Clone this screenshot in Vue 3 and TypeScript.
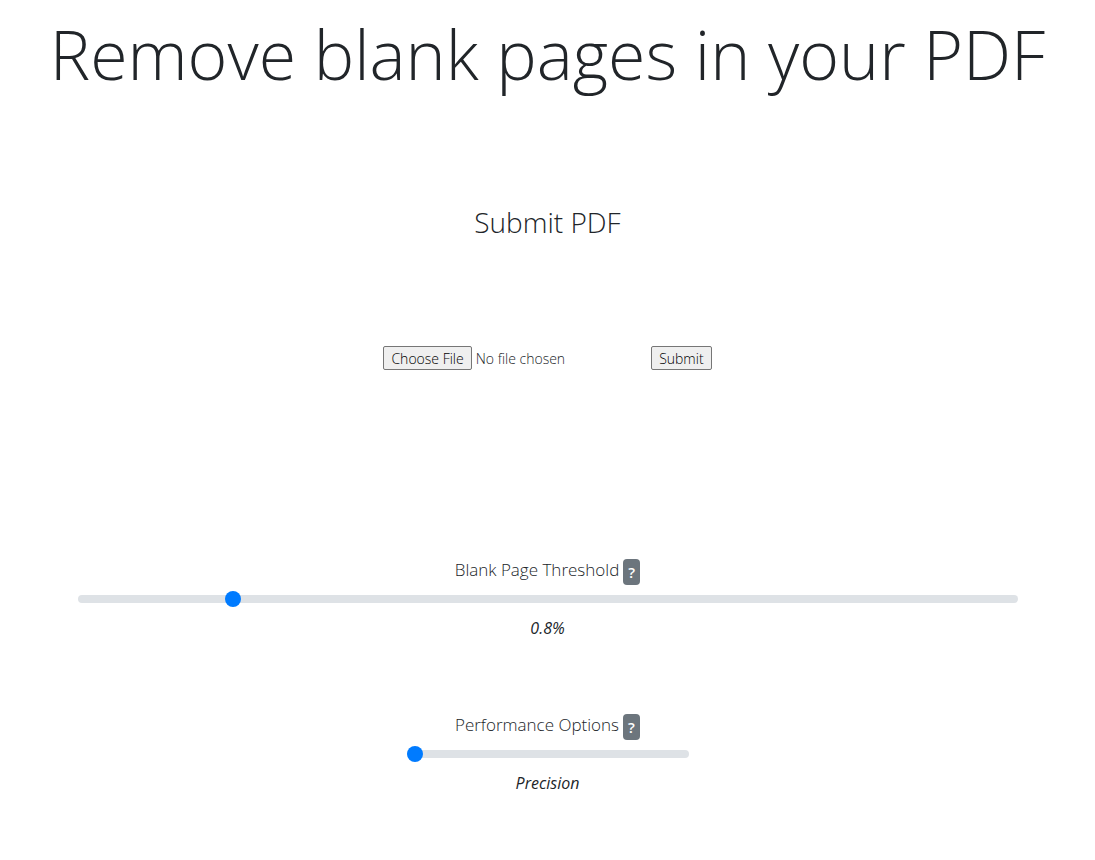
<script setup lang="ts">
import { computed, ref } from 'vue'

const threshold = ref(0.8)
const performance = ref(0)
const modes = ['Precision', 'Balanced', 'Speed']
const thresholdText = computed(() => `${threshold.value.toFixed(1)}%`)
const fileInput = ref<HTMLInputElement | null>(null)
const fileName = ref('No file chosen')

function updateFile() {
  fileName.value = fileInput.value?.files?.[0]?.name ?? 'No file chosen'
}
</script>

<template>
  <main class="page">
    <h1 class="title">Remove blank pages in your PDF</h1>
    <h2 class="subtitle">Submit PDF</h2>
    <form class="upload" @submit.prevent>
      <input ref="fileInput" class="file" type="file" accept=".pdf" aria-label="PDF file" @change="updateFile" />
      <div class="picker">
        <button class="native" type="button" @click="fileInput?.click()">Choose File</button>
        <span class="filename">{{ fileName }}</span>
      </div>
      <button class="native" type="submit">Submit</button>
    </form>
    <section class="option wide">
      <div class="caption">
        <label for="threshold">Blank Page Threshold</label>
        <button class="help" type="button" title="About the threshold">?</button>
      </div>
      <input id="threshold" v-model.number="threshold" class="range" type="range" min="0" max="5" step="0.1" />
      <output class="value" for="threshold">{{ thresholdText }}</output>
    </section>
    <section class="option narrow">
      <div class="caption">
        <label for="performance">Performance Options</label>
        <button class="help" type="button" title="About performance">?</button>
      </div>
      <input id="performance" v-model.number="performance" class="range" type="range" min="0" max="2" />
      <output class="value" for="performance">{{ modes[performance] }}</output>
    </section>
  </main>
</template>

<style>
body {
  margin: 0;
  background: #fff;
}
</style>

<style scoped>
.page {
  display: flex;
  flex-direction: column;
  align-items: center;
  padding: 6px 16px 48px;
  font-family: "Segoe UI", "Open Sans", "Noto Sans", sans-serif;
  font-weight: 300;
  color: #212529;
}
.title {
  margin: 0;
  font-size: 68px;
  line-height: 96px;
  font-weight: 300;
  text-align: center;
}
.subtitle {
  margin: 100px 0 0;
  font-size: 28px;
  line-height: 40px;
  font-weight: 300;
}
.upload {
  display: flex;
  align-items: center;
  gap: 86px;
  margin-top: 104px;
}
.file {
  display: none;
}
.picker {
  display: flex;
  align-items: center;
  gap: 4px;
}
.filename {
  padding-top: 2px;
  font-size: 14px;
  line-height: 22px;
}
.native {
  height: 24px;
  padding: 2px 7px 0;
  border: 1px solid #767676;
  border-radius: 2px;
  background: #efefef;
  color: #000;
  font: inherit;
  font-size: 14px;
  line-height: 20px;
}
.option {
  display: flex;
  flex-direction: column;
  align-items: center;
}
.wide {
  width: 100%;
  max-width: 940px;
  margin-top: 189px;
}
.narrow {
  width: 282px;
  margin-top: 74px;
}
.caption {
  display: flex;
  align-items: flex-start;
  gap: 4px;
  height: 28px;
  font-size: 17px;
  line-height: 22px;
}
.help {
  width: 17px;
  height: 26px;
  padding: 0;
  border: 0;
  border-radius: 4px;
  background: #6c757d;
  color: #fff;
  font: inherit;
  font-size: 15px;
  font-weight: 600;
}
.range {
  appearance: none;
  width: 100%;
  height: 24px;
  margin: 0;
  background: transparent;
}
.range::-webkit-slider-runnable-track {
  height: 8px;
  border-radius: 4px;
  background: #dee2e6;
}
.range::-webkit-slider-thumb {
  appearance: none;
  width: 16px;
  height: 16px;
  margin-top: -4px;
  border: 0;
  border-radius: 50%;
  background: #007bff;
}
.value {
  margin-top: 5px;
  font-size: 16px;
  line-height: 24px;
  font-style: italic;
  font-weight: 400;
}
</style>
